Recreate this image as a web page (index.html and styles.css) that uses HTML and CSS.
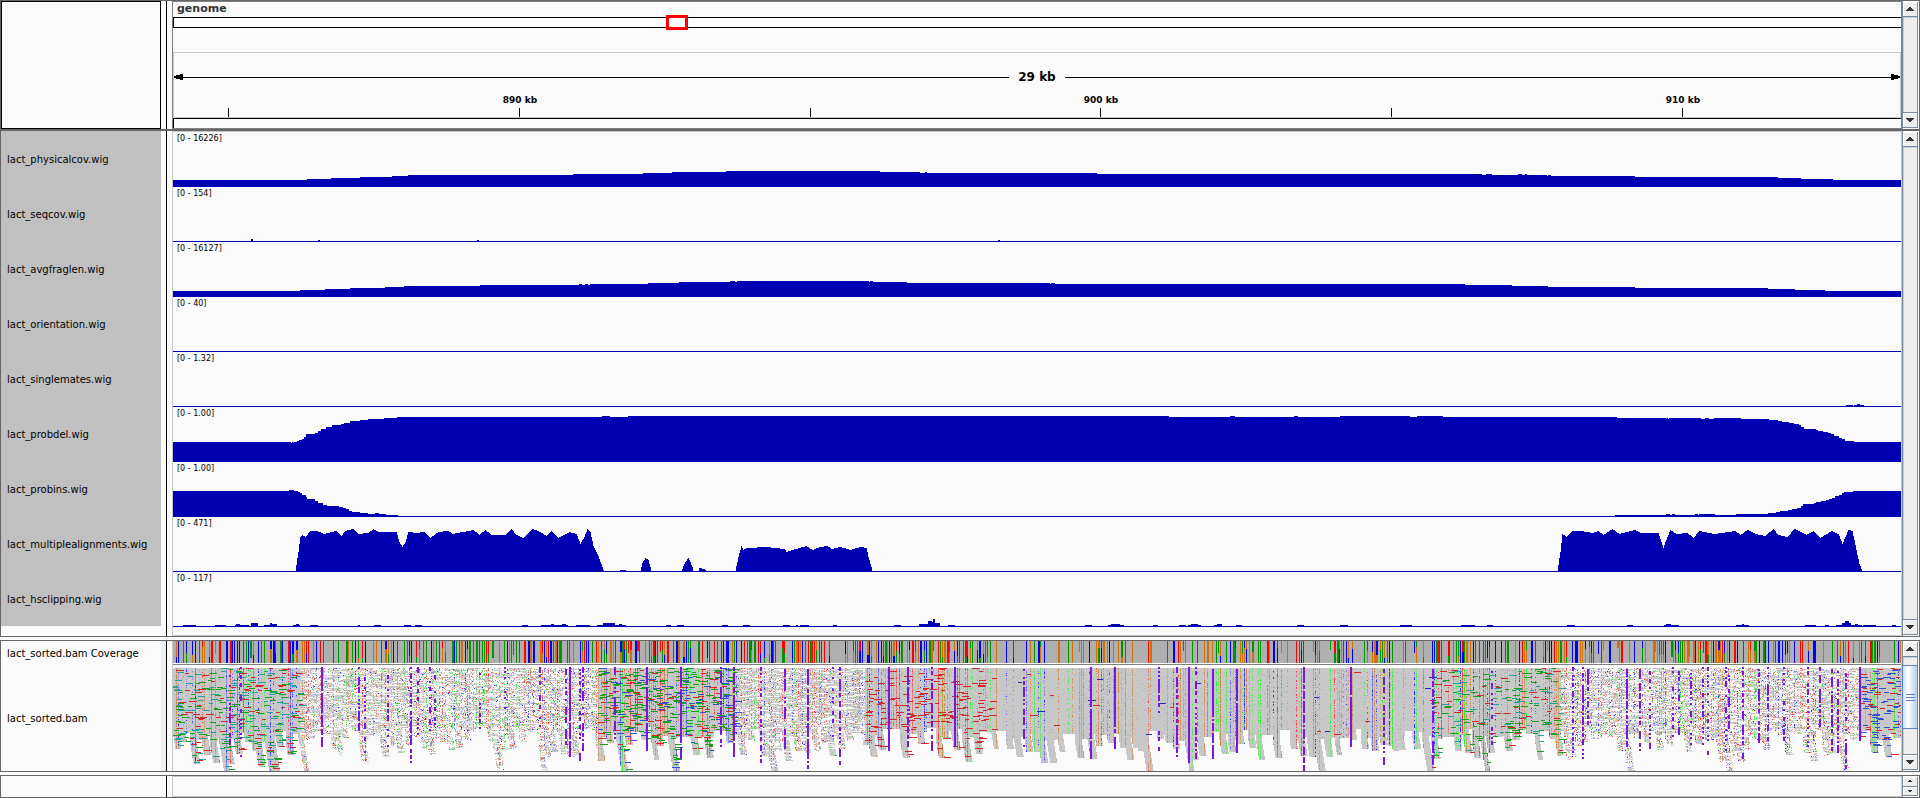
FILE: index.html
```html
<!DOCTYPE html>
<html lang="en">
<head>
<meta charset="utf-8">
<title>Genome viewer</title>
<link rel="stylesheet" href="styles.css">
</head>
<body>
<main class="viewer">
  <section class="panel panel-header">
    <div class="names name-box"></div>
    <div class="gutter"></div>
    <div class="plot plot-header">
      <div class="genome">genome</div>
      <div class="ideogram"><span class="locus"></span></div>
      <div class="ruler">
        <div class="span">
          <svg class="arrow" width="9" height="6" viewBox="0 0 9 6"><path d="M0 2h2v-1h4v-1h3v6h-3v-1h-4v-1h-2z"/></svg>
          <span class="line"></span>
          <span class="span-text">29 kb</span>
          <span class="line"></span>
          <svg class="arrow" width="9" height="6" viewBox="0 0 9 6"><path d="M9 2h-2v-1h-4v-1h-3v6h3v-1h4v-1h2z"/></svg>
        </div>
        <div class="ticks" id="ticks"></div>
      </div>
      <div class="sequence"></div>
    </div>
    <div class="scroll">
      <button class="step" type="button" aria-label="Scroll up"><svg width="8" height="4" viewBox="0 0 8 4"><path d="M3 0h2v1h1v1h1v1h1v1H0V3h1V2h1V1h1z"/></svg></button>
      <div class="track"></div>
      <button class="step" type="button" aria-label="Scroll down"><svg width="8" height="4" viewBox="0 0 8 4"><path d="M0 0h8v1H7v1H6v1H5v1H3V3H2V2H1V1H0z"/></svg></button>
    </div>
  </section>

  <section class="panel panel-tracks">
    <div class="names"><div class="name-list" id="names"></div></div>
    <div class="gutter"></div>
    <div class="plot plot-tracks" id="tracks"></div>
    <div class="scroll">
      <button class="step" type="button" aria-label="Scroll up"><svg width="8" height="4" viewBox="0 0 8 4"><path d="M3 0h2v1h1v1h1v1h1v1H0V3h1V2h1V1h1z"/></svg></button>
      <div class="track"></div>
      <button class="step" type="button" aria-label="Scroll down"><svg width="8" height="4" viewBox="0 0 8 4"><path d="M0 0h8v1H7v1H6v1H5v1H3V3H2V2H1V1H0z"/></svg></button>
    </div>
  </section>

  <section class="panel panel-reads">
    <div class="names">
      <div class="coverage-name">lact_sorted.bam Coverage</div>
      <div class="reads-name">lact_sorted.bam</div>
    </div>
    <div class="gutter gutter-shaded"></div>
    <div class="plot plot-reads">
      <canvas class="coverage" id="coverage" width="1728" height="22"></canvas>
      <canvas class="reads" id="reads" width="1728" height="104"></canvas>
    </div>
    <div class="scroll">
      <button class="step" type="button" aria-label="Scroll up"><svg width="8" height="4" viewBox="0 0 8 4"><path d="M3 0h2v1h1v1h1v1h1v1H0V3h1V2h1V1h1z"/></svg></button>
      <div class="track track-thumb"><div class="thumb"><i></i><i></i><i></i></div></div>
      <button class="step" type="button" aria-label="Scroll down"><svg width="8" height="4" viewBox="0 0 8 4"><path d="M0 0h8v1H7v1H6v1H5v1H3V3H2V2H1V1H0z"/></svg></button>
    </div>
  </section>

  <section class="panel panel-empty">
    <div class="names"></div>
    <div class="gutter"></div>
    <div class="plot plot-empty"></div>
    <div class="scroll scroll-small">
      <button class="step" type="button" aria-label="Scroll up"><svg width="4" height="2" viewBox="0 0 4 2"><path d="M1 0h2v1h1v1H0V1h1z"/></svg></button>
      <button class="step" type="button" aria-label="Scroll down"><svg width="4" height="2" viewBox="0 0 4 2"><path d="M0 0h4v1H3v1H1V1H0z"/></svg></button>
    </div>
  </section>
</main>
<script src="app.js"></script>
</body>
</html>
```
FILE: styles.css
```css
* { box-sizing: border-box; }

body {
  margin: 0;
  background: #fafafa;
  color: #000;
  font-family: "DejaVu Sans", Verdana, sans-serif;
  font-size: 10px;
  line-height: 12px;
}

.viewer {
  display: flex;
  flex-direction: column;
  min-height: 100vh;
}

.panel {
  display: grid;
  grid-template-columns: 160px 11px minmax(0, 1fr) 17px;
  border: 1px solid #666;
}

.panel-header { min-height: 130px; }
.panel-tracks { flex: 1; }
.panel-reads { margin: 3px 0; min-height: 132px; }
.panel-empty { min-height: 23px; }

.name-box { border: 1px solid #000; }

.gutter {
  background: linear-gradient(#000, #000) 5px 0 / 1px 100% no-repeat;
}
.gutter-shaded {
  background:
    linear-gradient(#000, #000) 5px 0 / 1px 100% no-repeat,
    linear-gradient(#eee, #eee) 0 0 / 5px 100% no-repeat;
}

.plot {
  display: flex;
  flex-direction: column;
  border: 1px solid #c8c8c8;
}

/* header panel */
.plot-header { border-color: #808080; }
.genome {
  height: 15px;
  padding: 0 4px;
  color: #333;
  font-size: 11px;
  line-height: 14px;
  font-weight: bold;
}
.ideogram {
  position: relative;
  height: 11px;
  border: 1px solid #000;
  border-right: 0;
  background: #fff;
}
.locus {
  position: absolute;
  top: -3px;
  left: 28.5%;
  width: 22px;
  height: 15px;
  border: 3px solid #f00;
}
.ruler {
  position: relative;
  height: 66px;
  margin-top: 24px;
  padding-top: 18px;
  border: 1px solid #c8c8d2;
}
.span { display: flex; align-items: center; height: 12px; }
.line { flex: 1; height: 1px; background: #000; }
.span-text {
  width: 56px;
  text-align: center;
  font-size: 12px;
  line-height: 14px;
  font-weight: bold;
}
.tick {
  position: absolute;
  bottom: 0;
  width: 1px;
  height: 9px;
  background: #000;
}
.tick-text {
  position: absolute;
  bottom: 11px;
  width: 60px;
  margin-left: -29px;
  text-align: center;
  font-size: 9px;
  font-weight: bold;
}
.sequence {
  flex: 1;
  border-top: 1px solid #000;
  border-left: 1px solid #000;
}

/* signal tracks */
.name-list { padding-top: 1px; background: #c0c0c0; }
.name { height: 55px; padding-left: 6px; line-height: 56px; }
.name:last-child { height: 54px; }
.row { position: relative; height: 55px; }
.row-graph { display: block; width: 100%; height: 55px; fill: #0000b2; }
.range {
  position: absolute;
  top: 1px;
  left: 4px;
  font-size: 8px;
}

/* alignments */
.coverage-name { height: 24px; padding-left: 6px; line-height: 25px; }
.reads-name { height: 106px; padding-left: 6px; line-height: 108px; }
.plot-reads {
  border-width: 0 1px;
  background:
    linear-gradient(#808080, #808080) 0 23px / 100% 1px no-repeat,
    linear-gradient(#fff, #fff) 0 0 / 100% 27px no-repeat;
}
.coverage { display: block; width: 100%; height: 22px; image-rendering: pixelated; }
.reads {
  display: block;
  width: 100%;
  height: 104px;
  margin-top: 4px;
  image-rendering: pixelated;
}

/* scroll bars */
.scroll {
  display: flex;
  flex-direction: column;
  padding: 1px 0;
  border-left: 1px solid #7a8a99;
  border-right: 1px solid #fff;
}
.step {
  display: flex;
  align-items: center;
  justify-content: center;
  height: 15px;
  margin: 0;
  padding: 0;
  border: 1px solid #7a8a99;
  border-width: 0 1px 1px 0;
  background: #eee;
  box-shadow: inset 1px 1px #fff;
}
.track ~ .step { border-top-width: 1px; height: 16px; }
.step svg { fill: #333; }
.track {
  flex: 1;
  border-right: 1px solid #7a8a99;
  background: #eee;
  box-shadow: inset 1px 1px #b8cfe5;
}
.track-thumb { padding-top: 8px; }
.thumb {
  display: flex;
  flex-direction: column;
  align-items: center;
  justify-content: center;
  gap: 2px;
  height: 64px;
  margin: 0 -1px;
  border: 1px solid #6382bf;
  background: linear-gradient(90deg, #c8ddf2, #fff 35%, #b8cfe5);
}
.thumb i { width: 9px; height: 1px; background: #6382bf; }
.scroll-small .step { flex: 1; height: auto; }
```
FILE: app.js
```js
const START = 173, WIDTH = 1728;
const SVG_NS = "http://www.w3.org/2000/svg";

[[227, ""], [518, "890 kb"], [809, ""], [1099, "900 kb"], [1390, ""], [1681, "910 kb"]].forEach(([x, text]) => {
  const left = (x - START) / (WIDTH - 2) * 100 + "%";
  const host = document.getElementById("ticks");
  const tick = document.createElement("span");
  tick.className = "tick";
  tick.style.left = left;
  host.append(tick);
  if (text) {
    const label = document.createElement("span");
    label.className = "tick-text";
    label.style.left = left;
    label.textContent = text;
    host.append(label);
  }
});

/* steps: "x height" pairs, each height held until the next x */
const steps = text => {
  const h = new Array(WIDTH).fill(1);
  const v = text.trim().split(/\s+/).map(Number);
  for (let i = 0; i < v.length; i += 2) {
    const end = i + 2 < v.length ? v[i + 2] : START + WIDTH;
    for (let x = v[i]; x < end; x++) h[x - START] = v[i + 1];
  }
  return h;
};
/* slopes: heights interpolated between the given points */
const slopes = text => {
  const h = new Array(WIDTH).fill(1);
  const v = text.trim().split(/\s+/).map(Number);
  for (let i = 0; i + 3 < v.length; i += 2)
    for (let x = v[i]; x < v[i + 2]; x++)
      h[x - START] = Math.max(1, Math.round(v[i + 1] + (v[i + 3] - v[i + 1]) * (x - v[i]) / (v[i + 2] - v[i])));
  return h;
};
/* bumps: "from to height" triples over a flat line */
const bumps = text => {
  const h = new Array(WIDTH).fill(1);
  const v = text.trim().split(/\s+/).map(Number);
  for (let i = 0; i + 2 < v.length; i += 3)
    for (let x = v[i]; x < v[i + 1]; x++) h[x - START] = Math.max(h[x - START], v[i + 2]);
  return h;
};

const signals = [
  ["lact_physicalcov.wig", "[0 - 16226]", steps("173 7 307 8 331 9 360 10 392 11 408 12 573 13 643 14 672 15 726 16 880 15 920 14 925 15 927 14 1097 13 1482 12 1486 13 1492 12 1518 13 1522 12 1525 13 1527 12 1547 11 1548 12 1551 11 1635 10 1778 9 1801 8 1833 7")],
  ["lact_seqcov.wig", "[0 - 154]", bumps("251 253 3 318 320 2 477 479 2 998 1000 2")],
  ["lact_avgfraglen.wig", "[0 - 16127]", steps("173 6 300 7 325 8 350 9 385 10 404 11 480 12 579 13 582 12 585 13 588 12 590 13 648 14 679 15 730 16 735 15 737 16 869 15 870 16 873 15 907 14 1050 13 1051 14 1055 13 1465 12 1512 11 1548 10 1635 9 1768 8 1795 7 1825 6")],
  ["lact_orientation.wig", "[0 - 40]", bumps("")],
  ["lact_singlemates.wig", "[0 - 1.32]", bumps("1846 1853 2 1854 1864 2 1857 1860 3")],
  ["lact_probdel.wig", "[0 - 1.00]", steps("173 20 291 19 292 20 297 21 299 22 302 23 304 25 306 28 315 29 318 31 321 33 326 35 332 37 341 38 344 39 350 41 360 42 368 43 384 44 397 45 602 46 610 45 628 46 1169 45 1230 46 1235 45 1294 46 1298 45 1340 46 1410 45 1417 46 1443 45 1617 44 1668 43 1669 44 1701 43 1705 44 1709 43 1714 44 1741 43 1769 42 1778 41 1782 40 1789 39 1794 38 1799 37 1801 35 1804 33 1816 32 1818 31 1823 30 1828 29 1831 28 1834 26 1839 24 1842 23 1845 21 1854 20")],
  ["lact_probins.wig", "[0 - 1.00]", steps("173 26 289 27 294 26 298 25 300 24 302 22 306 20 307 18 315 16 318 14 323 12 327 11 339 10 343 9 346 8 349 6 352 5 360 4 368 3 375 4 379 3 386 2 398 1 1615 2 1666 3 1670 2 1672 3 1675 2 1695 3 1698 2 1699 3 1715 2 1736 3 1768 4 1776 5 1780 6 1788 7 1792 8 1797 9 1801 11 1803 13 1814 14 1816 15 1821 16 1826 17 1829 18 1832 19 1835 21 1839 22 1842 24 1844 25 1853 26")],
  ["lact_multiplealignments.wig", "[0 - 471]", slopes("173 1 295 1 298 20 300 35 302 37 305 35 310 41 316 41 324 38 336 41 341 36 345 41 353 43 358 38 368 39 373 43 378 40 396 40 399 30 402 25 405 30 408 40 416 39 424 40 430 34 438 40 448 41 452 38 473 42 479 37 485 42 491 37 505 37 511 43 516 37 523 34 532 43 540 40 546 36 551 41 558 34 569 40 576 38 580 28 584 35 587 43 590 40 593 26 598 16 603 2 604 1 619 1 620 2 625 2 626 1 640 1 642 9 645 14 648 12 651 1 681 1 685 10 688 14 692 5 693 1 698 1 699 4 704 3 706 1 735 1 738 15 741 26 743 22 747 24 766 25 784 23 786 20 792 22 806 26 812 22 820 25 827 26 831 23 840 25 850 22 860 25 866 24 868 15 872 1 1557 1 1560 20 1562 38 1566 35 1572 41 1581 41 1592 39 1598 41 1603 37 1612 43 1619 38 1634 42 1640 39 1658 39 1663 24 1665 30 1670 42 1676 38 1687 39 1693 34 1699 41 1714 38 1735 41 1740 37 1747 42 1755 38 1765 36 1773 43 1778 37 1787 35 1794 43 1806 37 1813 41 1820 34 1831 41 1838 38 1842 28 1848 42 1852 41 1856 22 1859 8 1862 1 1901 1")],
  ["lact_hsclipping.wig", "[0 - 117]", bumps("183 196 2 215 226 2 235 249 2 236 240 3 251 258 4 264 277 2 270 277 3 270 272 4 293 300 2 296 299 3 310 318 2 358 360 2 374 381 2 404 411 2 415 422 2 522 528 2 541 560 2 551 554 3 560 568 2 562 566 3 576 590 2 597 626 2 603 615 4 619 622 3 666 671 2 677 684 2 722 728 2 743 750 2 783 790 2 796 798 2 800 809 2 833 837 2 894 901 2 919 928 3 928 932 6 932 933 5 933 935 8 935 940 4 948 955 2 1085 1092 2 1108 1124 2 1111 1120 3 1153 1158 2 1179 1186 2 1188 1201 2 1191 1198 3 1214 1222 2 1217 1222 3 1236 1242 2 1297 1304 2 1340 1348 2 1400 1412 2 1461 1475 2 1487 1493 2 1567 1575 2 1627 1633 2 1664 1679 2 1666 1671 3 1736 1749 2 1742 1744 3 1805 1816 2 1825 1829 2 1836 1842 2 1842 1851 4 1845 1849 6 1851 1862 2 1855 1858 3 1863 1876 2 1892 1896 2")]
];

signals.forEach(([name, range, heights]) => {
  const label = document.createElement("div");
  label.className = "name";
  label.textContent = name;
  document.getElementById("names").append(label);

  const row = document.createElement("div");
  row.className = "row";
  const svg = document.createElementNS(SVG_NS, "svg");
  svg.setAttribute("class", "row-graph");
  svg.setAttribute("viewBox", `0 0 ${WIDTH} 55`);
  svg.setAttribute("preserveAspectRatio", "none");
  svg.setAttribute("shape-rendering", "crispEdges");
  let d = "M0 55";
  heights.forEach((h, x) => {
    if (x === 0 || heights[x - 1] !== h) d += `H${x}V${55 - h}`;
  });
  const path = document.createElementNS(SVG_NS, "path");
  path.setAttribute("d", d + `H${WIDTH}V55Z`);
  svg.append(path);
  const text = document.createElement("span");
  text.className = "range";
  text.textContent = range;
  row.append(svg, text);
  document.getElementById("tracks").append(row);
});

/* alignments */
let seed = 20117;
const rnd = () => {
  seed = (seed + 0x6d2b79f5) | 0;
  let t = Math.imul(seed ^ (seed >>> 15), 1 | seed);
  t = (t + Math.imul(t ^ (t >>> 7), 61 | t)) ^ t;
  return ((t ^ (t >>> 14)) >>> 0) / 4294967296;
};
const pick = list => list[Math.floor(rnd() * list.length)];

const RED = "#ff0000", GREEN = "#009600", BLUE = "#0000ff", ORANGE = "#d17105";
const SOFT = { [RED]: "#ff3a3a", [GREEN]: "#2ef02e", [BLUE]: "#3434ff", [ORANGE]: "#c8873a" };
const PALE = { [RED]: "#e08484", [GREEN]: "#84dc84", [BLUE]: "#8a8ae0", [ORANGE]: "#cfa784" };
const dR = "#d22828", dG = "#18a018", dT = "#28a0a0", dB = "#3250d2";

const regions = [
  { to: 300, dense: true, dashes: [dR, dG, dT, dG, dR, dT], rate: 0.06, snp: 0.42, floor: 74 },
  { to: 400, dense: false, gray: 0.44, noise: 0.11, snp: 0.34, floor: 72 },
  { to: 598, dense: false, gray: 0.3, noise: 0.14, snp: 0.36, floor: 70 },
  { to: 735, dense: true, dashes: [dG, dR, dB, dG, dG], rate: 0.085, snp: 0.55, floor: 70 },
  { to: 865, dense: false, gray: 0.58, noise: 0.1, snp: 0.5, floor: 70 },
  { to: 995, dense: true, dashes: [dR], rate: 0.032, snp: 0.42, floor: 70 },
  { to: 1430, dense: true, dashes: [dR, "#2828b4"], rate: 0.001, snp: 0.34, floor: 72 },
  { to: 1560, dense: true, dashes: [dG, dT, dG, dR], rate: 0.042, snp: 0.48, floor: 72 },
  { to: 1860, dense: false, gray: 0.38, noise: 0.13, snp: 0.42, floor: 72 },
  { to: 1901, dense: true, dashes: [dR, dB, dB], rate: 0.08, snp: 0.44, floor: 72 }
];
const regionAt = x => regions.find(r => x + START < r.to);

const cov = document.getElementById("coverage").getContext("2d");
const reads = document.getElementById("reads").getContext("2d");
const box = (ctx, color, x, y, w, h) => { ctx.fillStyle = color; ctx.fillRect(x, y, w, h); };

/* depth profile: an even floor with slanting tails below it */
const HEIGHT = 103;
const covered = Array.from({ length: HEIGHT }, () => new Uint8Array(WIDTH));
for (let x = 0; x < WIDTH;) {
  const w = 5 + Math.floor(rnd() * 8);
  const base = regionAt(x).floor - Math.floor(rnd() * 12);
  const tail = rnd();
  const deep = tail < 0.12 ? HEIGHT : tail < 0.75 ? base + 8 + Math.floor(rnd() * 18) : base;
  for (let y = 0; y < deep; y++) {
    const shift = Math.max(0, Math.floor((y - base) / 6));
    const width = y < base ? w : Math.min(w, 7);
    for (let i = 0; i < width; i++) {
      const px = x + i + shift;
      if (px < WIDTH) covered[y][px] = 1;
    }
  }
  x += w;
}

/* read rows */
box(reads, "#fafafa", 0, 1, WIDTH, HEIGHT);
for (let y = 0; y < HEIGHT; y++) {
  let left = 0, on = true;
  for (let x = 0; x < WIDTH; x++) {
    const r = regionAt(x);
    if (left-- <= 0) { on = rnd() < (r.gray || 1); left = 1 + Math.floor(rnd() * 9); }
    if (!covered[y][x]) continue;
    if (r.dense) {
      box(reads, rnd() < 0.05 ? "#b8b8b8" : "#c8c8c8", x, y + 1, 1, 1);
    } else {
      if (on) box(reads, rnd() < 0.15 ? "#e4dede" : "#cacaca", x, y + 1, 1, 1);
      else if (rnd() < 0.12) box(reads, pick(["#fde3df", "#e2e6fa", "#e6f2e2"]), x, y + 1, 3, 1);
      if (rnd() < r.noise) {
        const c = pick([RED, GREEN, BLUE, ORANGE]);
        box(reads, rnd() < 0.3 ? SOFT[c] : PALE[c], x, y + 1, 1, 1);
      }
    }
  }
}

/* coverage bars with their mismatch columns */
box(cov, "#afafaf", 0, 0, WIDTH, 22);
for (let x = 2; x < WIDTH; x++) {
  const r = regionAt(x);
  const abs = x + START;
  const quiet = (abs > 829 && abs < 843) || (abs > 1017 && abs < 1026) || (abs > 1322 && abs < 1330);
  if (quiet || rnd() > r.snp) continue;
  const c = abs > 600 && abs < 830 ? pick([RED, RED, GREEN, BLUE, ORANGE]) : pick([RED, GREEN, BLUE, ORANGE]);
  const split = rnd() < 0.4;
  const cut = 6 + Math.floor(rnd() * 12);
  const wide = rnd() < 0.2 ? 2 : 1;
  box(cov, c, x, 0, wide, 22);
  if (split) box(cov, rnd() < 0.1 ? "#afafaf" : pick([GREEN, BLUE, ORANGE]), x, cut, wide, 22 - cut);
  const strength = r.dense ? pick([0.3, 0.6, 0.95]) : 0.3;
  const bright = r.dense && rnd() < 0.3 ? 0.6 : 0.2;
  for (let y = 0; y < HEIGHT; y++)
    if (covered[y][x] && rnd() < strength) box(reads, rnd() < bright ? SOFT[c] : PALE[c], x, y + 1, 1, 1);
  x += 1;
}

/* discordant pairs */
for (let y = 0; y < HEIGHT; y++)
  for (let x = 0; x < WIDTH; x++) {
    const r = regionAt(x);
    if (r.dashes && covered[y][x] && rnd() < r.rate * 0.55) {
      const w = 4 + Math.floor(rnd() * 5);
      box(reads, pick(r.dashes), x, y + 1, w, 1);
      x += w;
    }
  }

/* insertions: x, share of rows drawn, last row */
const insertions = [
  [241, .4, 90], [230, .4, 92], [322, .8, 80], [359, .6, 64], [365, .3, 88], [388, .4, 88], [411, .55, 97], [418, .4, 68], [430, .3, 64], [435, .3, 60],
  [480, .3, 64], [505, .35, 66], [540, .3, 60], [566, .6, 78], [570, .95, 89], [580, .4, 95], [583, .5, 95], [615, .5, 72], [647, .95, 84], [681, .9, 92], [721, .7, 80], [734, .8, 90], [761, .5, 98], [785, .6, 86],
  [808, .85, 102], [833, .3, 70], [840, .7, 98], [889, 1, 83], [908, .85, 80], [932, .6, 84], [955, 1, 80],
  [1024, .5, 82], [1091, .97, 92], [1115, .95, 82], [1159, .6, 84], [1177, .7, 90], [1189, 1, 95], [1196, .5, 92], [1213, .9, 92], [1237, .95, 86], [1304, .75, 103], [1351, .9, 80], [1384, .55, 98], [1433, .6, 98],
  [1492, .5, 85], [1573, .5, 88], [1583, .6, 92], [1588, .5, 66], [1627, .85, 81], [1640, .5, 85], [1650, .4, 84], [1673, .4, 80], [1679, .5, 78], [1691, .4, 80], [1703, .4, 82], [1708, .4, 90], [1726, .4, 84], [1729, .4, 70], [1743, .5, 94], [1759, .6, 78], [1768, .5, 76], [1784, .5, 82], [1808, .4, 80], [1820, .6, 64], [1832, .6, 84], [1838, .5, 86], [1846, .5, 102], [1860, 1, 74]
];
insertions.forEach(([x, share, end]) => {
  for (let y = 0; y < end; y += 2)
    if (rnd() < share) box(reads, "#7a16dd", x - START - 1, y, 2, 2);
});
```
